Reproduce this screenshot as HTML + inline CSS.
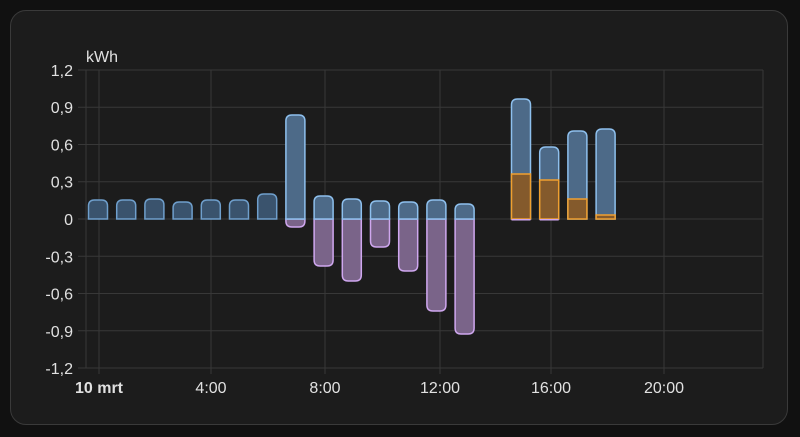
<!DOCTYPE html>
<html><head><meta charset="utf-8"><style>
html,body{margin:0;padding:0;background:#111;width:800px;height:437px;overflow:hidden}
.card{position:absolute;left:10px;top:10px;width:778px;height:415px;background:#1c1c1c;border:1px solid #3a3a3a;border-radius:16px;box-sizing:border-box}
svg{position:absolute;left:0;top:0}
text{font-family:"Liberation Sans",sans-serif;fill:#e1e1e1;font-size:16px}
</style></head><body>
<div class="card"></div>
<svg id="s" width="800" height="437" xmlns="http://www.w3.org/2000/svg"></svg>
<script>
var s=document.getElementById('s'),h='';
var Z=219,U=124.2; // px per 1.0
// grid
for(var i=-4;i<=4;i++){var y=Z-i*0.3*U;h+='<line x1="78" x2="763" y1="'+y+'" y2="'+y+'" stroke="#383838"/>';
var l=(i<0?'-':'')+(Math.abs(i)*0.3).toFixed(1).replace('.',',');if(i==0)l='0';
h+='<text x="73" y="'+(y+6)+'" text-anchor="end">'+l+'</text>';}
h+='<line x1="86" x2="86" y1="70" y2="368" stroke="#383838"/>';
var xs=[[99,'10 mrt',1],[211,'4:00'],[325,'8:00'],[440,'12:00'],[551,'16:00'],[664,'20:00']];
xs.forEach(function(a){h+='<line x1="'+a[0]+'" x2="'+a[0]+'" y1="70" y2="374" stroke="#383838"/>';
h+='<text x="'+a[0]+'" y="393" text-anchor="middle"'+(a[2]?' font-weight="bold"':'')+'>'+a[1]+'</text>';});
h+='<line x1="763" x2="763" y1="70" y2="368" stroke="#383838"/>';
h+='<text x="86" y="62">kWh</text>';
function up(x,t,b,f,st,r){var w=19;r=Math.min(r,(b-t));return '<path d="M'+x+' '+b+'V'+(t+r)+'Q'+x+' '+t+' '+(x+r)+' '+t+'H'+(x+w-r)+'Q'+(x+w)+' '+t+' '+(x+w)+' '+(t+r)+'V'+b+'Z" fill="'+f+'" stroke="'+st+'" stroke-width="1.5"/>';}
function dn(x,t,b,f,st,r){var w=19;r=Math.min(r,(b-t));return '<path d="M'+x+' '+t+'V'+(b-r)+'Q'+x+' '+b+' '+(x+r)+' '+b+'H'+(x+w-r)+'Q'+(x+w)+' '+b+' '+(x+w)+' '+(b-r)+'V'+t+'Z" fill="'+f+'" stroke="'+st+'" stroke-width="1.5"/>';}
function cx(i){return 98+i*28.2-9.5;}
var B='#4d6a88',BS='#8ec0ee',D='#3a536d',DS='#6f9fcc',P='#7a6489',PS='#cfa7ef',O='#845a2c',OS='#f0a030';
var dk=[200,200,199,202,200,200,194];
dk.forEach(function(t,i){h+=up(cx(i),t,Z,D,DS,6);});
var d=[[7,115,227],[8,196,266],[9,199,281],[10,201,247],[11,202,271],[12,200,311],[13,204,334]];
d.forEach(function(a){h+=dn(cx(a[0]),Z,a[2],P,PS,6);h+=up(cx(a[0]),a[1],Z,B,BS,6);});
var o=[[15,99,174,221],[16,147,180,221],[17,131,199,0],[18,129,215,0]];
o.forEach(function(a){var x=cx(a[0]);h+=up(x,a[1],Z,B,BS,6);
h+='<rect x="'+x+'" y="'+a[2]+'" width="19" height="'+(Z-a[2])+'" fill="'+O+'" stroke="'+OS+'" stroke-width="1.5"/>';
if(a[3])h+='<rect x="'+x+'" y="'+Z+'" width="19" height="1.5" fill="'+PS+'"/>';});
s.innerHTML=h;
</script>
</body></html>
